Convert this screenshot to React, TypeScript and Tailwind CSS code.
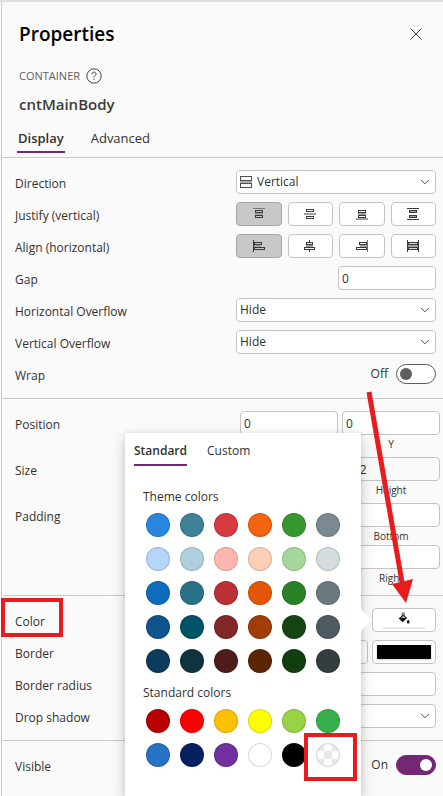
import { useId, useState, type ReactNode } from "react";

const themeColors: [string, string][] = [
  ["Blue", "#2886de"], ["Teal", "#3f8196"], ["Red", "#d73a3f"], ["Orange", "#f2640f"], ["Green", "#35992f"], ["Gray", "#7a8a90"],
  ["Light blue", "#b4d6fa"], ["Light teal", "#aed0dc"], ["Light red", "#ffb6af"], ["Light orange", "#fdcfb5"], ["Light green", "#a6d79a"], ["Light gray", "#d5dce0"],
  ["Medium blue", "#0f6cbd"], ["Medium teal", "#287186"], ["Medium red", "#bc2f34"], ["Medium orange", "#e25706"], ["Medium green", "#2c8028"], ["Medium gray", "#69797e"],
  ["Dark blue", "#0f548c"], ["Dark teal", "#005364"], ["Dark red", "#832827"], ["Dark orange", "#a13d08"], ["Dark green", "#144512"], ["Dark gray", "#4e5a5f"],
  ["Deep blue", "#0c3b5e"], ["Deep teal", "#0e343e"], ["Deep red", "#4f1c1b"], ["Deep orange", "#5c2605"], ["Deep green", "#123d10"], ["Deep gray", "#343d40"],
];

const standardColors: [string, string][] = [
  ["Crimson", "#b80000"], ["Bright red", "#ff0000"], ["Gold", "#ffc000"], ["Yellow", "#ffff00"], ["Lime", "#98d347"], ["Emerald", "#37b04c"],
  ["Azure", "#2672c4"], ["Navy", "#07205f"], ["Purple", "#7030a0"], ["White", "#ffffff"], ["Black", "#000000"],
];

const box = "h-6 rounded border border-[#c4c4c4] text-xs text-[#323130]";

function Row({ label, htmlFor, children, boxed }: { label: string; htmlFor?: string; children: ReactNode; boxed?: boolean }) {
  return (
    <div className="relative flex items-start justify-between">
      <label htmlFor={htmlFor} className="pt-1 leading-5">{label}</label>
      {boxed && <span className="pointer-events-none absolute -top-[10px] -left-[14px] h-[39px] w-[62px] border-4 border-[#e81c1c]" />}
      {children}
    </div>
  );
}

function Chevron() {
  return (
    <svg className="pointer-events-none absolute top-[9px] right-[6px] h-[6px] w-[10px]" viewBox="0 0 10 6" fill="none" stroke="#505050">
      <path d="M1 .8l4 4 4-4" />
    </svg>
  );
}

function DropDown({ label, value, icon, options }: { label: string; value: string; icon?: ReactNode; options: string[] }) {
  const id = useId();
  return (
    <Row label={label} htmlFor={id}>
      <div className="relative w-[200px]">
        {icon}
        <select id={id} defaultValue={value} className={`${box} block w-full appearance-none bg-white ${icon ? "pl-5" : "pl-[3px]"}`}>
          {options.map((o) => <option key={o}>{o}</option>)}
        </select>
        <Chevron />
      </div>
    </Row>
  );
}

function Glyph({ children }: { children: ReactNode }) {
  return <svg className="h-3 w-3" viewBox="0 0 12 12" shapeRendering="crispEdges">{children}</svg>;
}

function Bar({ x, y, w, h, light }: { x: number; y: number; w: number; h: number; light?: boolean }) {
  return <rect x={x} y={y} width={w} height={h} fill={light ? "#a0a0a0" : "#3a3a3a"} />;
}

function Slot({ x, y, w, h = 3, fill = "none" }: { x: number; y: number; w: number; h?: number; fill?: string }) {
  return <rect x={x + 0.5} y={y + 0.5} width={w - 1} height={h - 1} fill={fill} stroke="#3a3a3a" />;
}

const justifyIcons: [string, ReactNode][] = [
  ["Start", <Glyph key="s"><rect width="12" height="1" fill="#777" /><Bar x={2} y={5} w={8} h={2} light /><Slot x={2} y={2} w={8} /><Slot x={2} y={7} w={8} /></Glyph>],
  ["Center", <Glyph key="c"><Slot x={2} y={1} w={8} /><Bar x={0} y={5} w={12} h={2} light /><Slot x={2} y={8} w={8} /></Glyph>],
  ["End", <Glyph key="e"><Bar x={2} y={5} w={8} h={2} light /><Slot x={2} y={2} w={8} /><Slot x={2} y={7} w={8} /><Bar x={0} y={10} w={12} h={2} light /></Glyph>],
  ["Space between", <Glyph key="b"><Bar x={0} y={0} w={12} h={1} /><Bar x={0} y={11} w={12} h={1} /><Slot x={2} y={2} w={8} fill="#a0a0a0" /><Slot x={2} y={7} w={8} fill="#a0a0a0" /></Glyph>],
];

const alignIcons: [string, ReactNode][] = [
  ["Left", <Glyph key="l"><Bar x={0} y={0} w={1} h={12} /><Bar x={1} y={5} w={7} h={2} light /><Slot x={1} y={2} w={8} /><Slot x={1} y={7} w={11} /></Glyph>],
  ["Center", <Glyph key="c"><Bar x={5} y={0} w={1} h={12} /><Bar x={2} y={5} w={7} h={2} light /><Slot x={2} y={2} w={7} fill="#fff" /><Slot x={0} y={7} w={11} fill="#fff" /></Glyph>],
  ["Right", <Glyph key="r"><rect x="11" width="1" height="12" fill="#777" /><Bar x={4} y={5} w={7} h={2} light /><Slot x={3} y={2} w={8} /><Slot x={0} y={7} w={11} /></Glyph>],
  ["Stretch", <Glyph key="t"><Bar x={0} y={0} w={1} h={12} /><Bar x={11} y={0} w={1} h={12} /><Bar x={1} y={5} w={10} h={2} light /><Slot x={1} y={2} w={10} fill="#ddd" /><Slot x={1} y={7} w={10} fill="#ddd" /></Glyph>],
];

function IconChoice({ label, icons }: { label: string; icons: [string, ReactNode][] }) {
  const [picked, setPicked] = useState(0);
  return (
    <Row label={label}>
      <div className="grid w-[200px] grid-cols-4 gap-[6px]">
        {icons.map(([name, icon], i) => (
          <button key={name} aria-label={`${label}: ${name}`} aria-pressed={i === picked} onClick={() => setPicked(i)}
            className={`grid h-6 place-items-center rounded border ${i === picked ? "border-[#a6a6a6] bg-[#c8c8c8]" : "border-[#c4c4c4] bg-white"}`}>
            {icon}
          </button>
        ))}
      </div>
    </Row>
  );
}

function Toggle({ label, on }: { label: string; on: boolean }) {
  const id = useId();
  const [checked, setChecked] = useState(on);
  return (
    <Row label={label} htmlFor={id}>
      <div className="flex h-6 items-center gap-2">
        <span>{checked ? "On" : "Off"}</span>
        <input id={id} type="checkbox" role="switch" checked={checked} onChange={() => setChecked(!checked)}
          className="h-5 w-10 appearance-none rounded-full border border-[#605e5c] bg-white p-[3px] before:block before:size-3 before:rounded-full before:bg-[#605e5c] checked:border-[#742774] checked:bg-[#742774] checked:before:ml-5 checked:before:bg-white" />
      </div>
    </Row>
  );
}

function Field({ name, caption, value, disabled }: { name: string; caption: string; value?: string; disabled?: boolean }) {
  const id = useId();
  return (
    <div className="w-[98px]">
      <input id={id} aria-label={`${name} ${caption}`} defaultValue={value} disabled={disabled}
        className={`${box} block w-full px-[3px] ${disabled ? "bg-[#fafafa] text-[#605e5c]" : "bg-white"}`} />
      <label htmlFor={id} className="block text-center text-[10px] leading-[18px]">{caption}</label>
    </div>
  );
}

function Swatch({ name, color }: { name: string; color: string }) {
  return <button aria-label={name} title={name} style={{ backgroundColor: color }} className="size-6 rounded-full border border-black/15" />;
}

function ColorPopup() {
  return (
    <div role="dialog" aria-label="Color picker" className="absolute top-[431px] right-[82px] bottom-0 w-[236px] bg-white pt-2 shadow-[0_6px_14px_rgba(0,0,0,0.2),0_0_4px_rgba(0,0,0,0.1)]">
      <svg className="absolute top-[176px] -right-[10px] h-[22px] w-[10px]" viewBox="0 0 10 22"><path d="M0 0l10 11L0 22z" fill="#fff" /></svg>
      <div role="tablist" className="flex gap-5 pl-[9px] leading-5">
        <button role="tab" aria-selected="true" className="border-b-2 border-[#742774] pb-[3px] font-semibold">Standard</button>
        <button role="tab" aria-selected="false" className="border-b-2 border-transparent pb-[3px]">Custom</button>
      </div>
      <h3 className="mt-[21px] pl-[18px] leading-5">Theme colors</h3>
      <div className="mt-[6px] grid grid-cols-[repeat(6,24px)] gap-[10px] pl-[21px]">
        {themeColors.map(([name, color]) => <Swatch key={name} name={name} color={color} />)}
      </div>
      <h3 className="mt-[10px] pl-[18px] leading-5">Standard colors</h3>
      <div className="mt-[6px] grid grid-cols-[repeat(6,24px)] gap-[10px] pl-[21px]">
        {standardColors.map(([name, color]) => <Swatch key={name} name={name} color={color} />)}
        <div className="relative size-6">
          <button aria-label="Transparent" title="Transparent" className="size-6 rounded-full border border-[#d0d0d0] bg-[conic-gradient(#fff_25%,#e8e8e8_0_50%,#fff_0_75%,#e8e8e8_0)] bg-[length:16px_16px] bg-[position:-1px_-1px]" />
          <span className="pointer-events-none absolute -top-[10px] -left-[12px] h-12 w-[53px] border-4 border-[#e81c1c]" />
        </div>
      </div>
    </div>
  );
}

export default function App() {
  return (
    <div className="relative flex min-h-screen overflow-hidden border-t-2 border-[#dedede] bg-white pl-px font-['Open_Sans','Noto_Sans',sans-serif] text-xs text-[#323130]">
      <main className="min-w-0 flex-1 border-l border-[#c8c8c8] bg-[#fafafa] pl-px">
        <header className="pt-[18px] pl-4">
          <div className="flex items-center justify-between pr-5">
            <h1 className="text-[19px] leading-7 font-semibold text-black">Properties</h1>
            <button aria-label="Close" className="mr-px">
              <svg className="size-3" viewBox="0 0 12 12" stroke="#333"><path d="M.5.5l11 11M11.5.5l-11 11" /></svg>
            </button>
          </div>
          <div className="mt-5 flex h-4 items-center gap-[6px] text-[11px] text-[#605e5c]">
            <span className="pt-px">CONTAINER</span>
            <button aria-label="Help">
              <svg className="size-4" viewBox="0 0 16 16" fill="none" stroke="#484644">
                <circle cx="8" cy="8" r="7.2" />
                <path d="M5.9 6.2c0-1.3.9-2.1 2.1-2.1s2.1.8 2.1 1.9c0 1.6-2.1 1.7-2.1 3.5" />
                <path d="M8 10.8v1.2" />
              </svg>
            </button>
          </div>
          <h2 className="mt-2 text-[15px] leading-6 font-semibold text-[#3b3a39]">cntMainBody</h2>
          <div role="tablist" className="mt-3 mb-1 -ml-[2px] flex gap-[26px] text-[13px] leading-5">
            <button role="tab" aria-selected="true" className="border-b-2 border-[#742774] px-px pb-[3px] font-semibold">Display</button>
            <button role="tab" aria-selected="false" className="border-b-2 border-transparent pb-[3px]">Advanced</button>
          </div>
        </header>

        <section className="flex flex-col gap-2 border-t border-[#c8c8c8] py-3 pr-[7px] pl-3">
          <DropDown label="Direction" value="Vertical" options={["Horizontal", "Vertical"]} icon={
            <svg className="pointer-events-none absolute top-[6px] left-1 h-3 w-3" viewBox="0 0 12 12" shapeRendering="crispEdges">
              <rect y="4" width="12" height="3" fill="#b0b0b0" />
              <rect x=".5" y=".5" width="11" height="4" fill="none" stroke="#505050" />
              <rect x=".5" y="7.5" width="11" height="4" fill="none" stroke="#505050" />
            </svg>
          } />
          <IconChoice label="Justify (vertical)" icons={justifyIcons} />
          <IconChoice label="Align (horizontal)" icons={alignIcons} />
          <Row label="Gap" htmlFor="gap">
            <input id="gap" defaultValue="0" className={`${box} w-[98px] bg-white px-[3px]`} />
          </Row>
          <DropDown label="Horizontal Overflow" value="Hide" options={["Hide", "Scroll"]} />
          <DropDown label="Vertical Overflow" value="Hide" options={["Hide", "Scroll"]} />
          <Toggle label="Wrap" on={false} />
        </section>

        <section className="flex flex-col gap-1 border-t border-[#c8c8c8] pt-3 pr-[3px] pb-2 pl-3">
          <Row label="Position">
            <div className="flex gap-1"><Field name="Position" caption="X" value="0" /><Field name="Position" caption="Y" value="0" /></div>
          </Row>
          <Row label="Size">
            <div className="flex gap-1"><Field name="Size" caption="Width" disabled /><Field name="Size" caption="Height" value="612" disabled /></div>
          </Row>
          <Row label="Padding">
            <div className="grid grid-cols-2 gap-x-1">
              <Field name="Padding" caption="Top" /><Field name="Padding" caption="Bottom" />
              <Field name="Padding" caption="Left" /><Field name="Padding" caption="Right" />
            </div>
          </Row>
        </section>

        <section className="flex flex-col gap-2 border-t border-[#c8c8c8] py-3 pr-[7px] pl-3">
          <Row label="Color" htmlFor="fill" boxed>
            <button id="fill" className="flex h-6 w-16 flex-col items-center rounded border border-[#c4c4c4] bg-white pt-[3px]">
              <svg className="h-3 w-3" viewBox="0 0 12 12">
                <path d="M4.2 4.6V1.7a1 1 0 0 1 2 0v2" fill="none" stroke="#333" strokeWidth=".9" />
                <path d="M5.3 2.4L9 6.1 4.7 10.2.7 6.6z" fill="#111" />
                <path d="M3 6l2.4-2.3L7.6 6z" fill="#bbb" />
                <path d="M10.2 7.4c.9 1.3 1.4 2 1.4 2.8a1.4 1.4 0 0 1-2.8 0c0-.8.5-1.5 1.4-2.8z" fill="#111" />
              </svg>
              <span className="h-[3px] w-[42px] shadow-[0_2px_2px_rgba(0,0,0,0.1)]" />
            </button>
          </Row>
          <Row label="Border" htmlFor="border-color">
            <div className="flex gap-1">
              <select aria-label="Border style" className={`${box} w-[132px] appearance-none bg-white`} />
              <button id="border-color" aria-label="Border color" className="h-6 w-16 rounded border border-[#c4c4c4] bg-white p-1">
                <span className="block h-[14px] bg-black shadow-[0_1px_2px_rgba(0,0,0,0.2)]" />
              </button>
            </div>
          </Row>
          <Row label="Border radius" htmlFor="radius">
            <input id="radius" className={`${box} w-[200px] bg-white px-[3px]`} />
          </Row>
          <DropDown label="Drop shadow" value="" options={[""]} />
        </section>

        <section className="border-t border-[#c8c8c8] py-3 pr-[7px] pl-3">
          <Toggle label="Visible" on />
        </section>
      </main>

      <ColorPopup />

      <svg className="pointer-events-none absolute top-[388px] right-[29px] h-[214px] w-[50px]" viewBox="0 0 50 214">
        <path d="M5 2L38 192" stroke="#e81c1c" strokeWidth="5" fill="none" />
        <path d="M28 194L49 189 42 213z" fill="#e81c1c" />
      </svg>
    </div>
  );
}
